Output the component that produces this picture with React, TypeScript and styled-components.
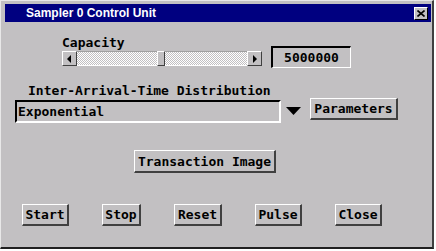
import React from 'react'
import styled, { createGlobalStyle } from 'styled-components'

const GlobalStyle = createGlobalStyle`
  html, body {
    margin: 0;
    padding: 0;
    background: #ffffff;
  }
`

const gray = '#c2c0c2'
const mono = `"DejaVu Sans Mono", "Liberation Mono", monospace`

const Window = styled.div`
  width: 434px;
  height: 249px;
  box-sizing: border-box;
  background: ${gray};
  border-top: 1px solid #e8e8e8;
  border-left: 1px solid #e8e8e8;
  border-right: 2px solid #404040;
  border-bottom: 2px solid #202020;
  padding: 3px 1px 0 4px;
  display: flex;
  flex-direction: column;
  font-family: ${mono};
`

const TitleBar = styled.div`
  height: 18px;
  background: #000080;
  display: flex;
  align-items: center;
  justify-content: space-between;
  padding: 0 3px 0 21px;
`

const Title = styled.span`
  color: #ffffff;
  font-family: 'Liberation Sans', Arial, sans-serif;
  font-weight: bold;
  font-size: 12px;
`

const CloseBox = styled.div`
  width: 14px;
  height: 13px;
  box-sizing: border-box;
  background: ${gray};
  border-top: 1px solid #ffffff;
  border-left: 1px solid #ffffff;
  border-right: 1px solid #000000;
  border-bottom: 1px solid #000000;
  display: flex;
  align-items: center;
  justify-content: center;
`

const Body = styled.div`
  flex: 1;
  display: flex;
  flex-direction: column;
  padding-top: 14px;
`

const Label = styled.div<{ $indent: number }>`
  margin-left: ${p => p.$indent}px;
  font-size: 13px;
  font-weight: bold;
  line-height: 14px;
  color: #000;
`

const CapacityRow = styled.div`
  display: flex;
  align-items: flex-end;
  margin-left: 57px;
`

const CapacityGroup = styled.div`
  display: flex;
  flex-direction: column;
  gap: 1px;
`

const Scrollbar = styled.div`
  width: 200px;
  height: 15px;
  display: flex;
  margin-bottom: 2px;
`

const Trough = styled.div`
  flex: 1;
  position: relative;
  background-color: #ffffff;
  background-image: repeating-conic-gradient(${gray} 0 25%, #ffffff 0 50%);
  background-size: 2px 2px;
  border-top: 1px solid #a0a0a0;
  border-bottom: 1px solid #ffffff;
`

const Thumb = styled.div`
  position: absolute;
  top: -1px;
  left: 80px;
  width: 8px;
  height: 15px;
  box-sizing: border-box;
  background: ${gray};
  border-top: 1px solid #ffffff;
  border-left: 1px solid #ffffff;
  border-right: 1px solid #404040;
  border-bottom: 1px solid #404040;
`

const ArrowBox = styled.div`
  width: 15px;
  height: 15px;
  box-sizing: border-box;
  background: ${gray};
  border-top: 1px solid #ffffff;
  border-left: 1px solid #ffffff;
  border-right: 1px solid #404040;
  border-bottom: 1px solid #404040;
  display: flex;
  align-items: center;
  justify-content: center;
`

const ValueField = styled.div`
  width: 80px;
  height: 22px;
  margin-left: 9px;
  box-sizing: border-box;
  background: ${gray};
  border-top: 2px solid #000000;
  border-left: 2px solid #000000;
  border-right: 1px solid #ffffff;
  border-bottom: 1px solid #ffffff;
  display: flex;
  align-items: center;
  justify-content: center;
  font-size: 13px;
  font-weight: bold;
`

const DistLabel = styled(Label)`
  margin-top: 16px;
`

const ComboRow = styled.div`
  display: flex;
  align-items: flex-start;
  margin-left: 10px;
  margin-top: 2px;
`

const ComboField = styled.div`
  width: 266px;
  height: 23px;
  box-sizing: border-box;
  background: ${gray};
  border-top: 2px solid #000000;
  border-left: 2px solid #000000;
  border-right: 2px solid #ffffff;
  border-bottom: 2px solid #ffffff;
  display: flex;
  align-items: center;
  padding-left: 1px;
  font-size: 13px;
  font-weight: bold;
`

const ComboArrow = styled.div`
  width: 22px;
  height: 22px;
  margin-left: 1px;
  display: flex;
  align-items: center;
  justify-content: center;
`

const Button = styled.button<{ $w: number; $h?: number }>`
  width: ${p => p.$w}px;
  height: ${p => p.$h ?? 22}px;
  box-sizing: border-box;
  padding: 0;
  margin: 0;
  background: ${gray};
  border-top: 1px solid #ffffff;
  border-left: 1px solid #ffffff;
  border-right: 2px solid #404040;
  border-bottom: 2px solid #404040;
  font-family: ${mono};
  font-size: 13px;
  font-weight: bold;
  color: #000;
  display: flex;
  align-items: center;
  justify-content: center;
`

const ParamsButton = styled(Button)`
  margin-left: 6px;
  margin-top: -2px;
`

const ImageRow = styled.div`
  margin-left: 129px;
  margin-top: 27px;
`

const ActionRow = styled.div`
  display: flex;
  margin-top: 31px;
  margin-left: 17px;
  gap: 33px;
`

const LeftArrow = () => (
  <svg width="5" height="8" viewBox="0 0 5 8">
    <polygon points="4,0 4,8 0,4" fill="#000" />
  </svg>
)

const RightArrow = () => (
  <svg width="5" height="8" viewBox="0 0 5 8">
    <polygon points="1,0 1,8 5,4" fill="#000" />
  </svg>
)

const DownArrow = () => (
  <svg width="15" height="8" viewBox="0 0 15 8">
    <polygon points="0,0 15,0 7.5,8" fill="#000" />
  </svg>
)

const CloseX = () => (
  <svg width="8" height="7" viewBox="0 0 8 7">
    <path d="M0.5 0.5 L7.5 6.5 M7.5 0.5 L0.5 6.5" stroke="#000" strokeWidth="1.6" />
  </svg>
)

export default function App() {
  return (
    <>
      <GlobalStyle />
      <Window>
        <TitleBar>
          <Title>Sampler 0 Control Unit</Title>
          <CloseBox>
            <CloseX />
          </CloseBox>
        </TitleBar>
        <Body>
          <CapacityRow>
            <CapacityGroup>
              <Label $indent={0}>Capacity</Label>
              <Scrollbar>
                <ArrowBox>
                  <LeftArrow />
                </ArrowBox>
                <Trough>
                  <Thumb />
                </Trough>
                <ArrowBox>
                  <RightArrow />
                </ArrowBox>
              </Scrollbar>
            </CapacityGroup>
            <ValueField>5000000</ValueField>
          </CapacityRow>

          <DistLabel $indent={23}>Inter-Arrival-Time Distribution</DistLabel>
          <ComboRow>
            <ComboField>Exponential</ComboField>
            <ComboArrow>
              <DownArrow />
            </ComboArrow>
            <ParamsButton $w={88}>Parameters</ParamsButton>
          </ComboRow>

          <ImageRow>
            <Button $w={142} $h={23}>Transaction Image</Button>
          </ImageRow>

          <ActionRow>
            <Button $w={47}>Start</Button>
            <Button $w={39}>Stop</Button>
            <Button $w={48}>Reset</Button>
            <Button $w={47}>Pulse</Button>
            <Button $w={47}>Close</Button>
          </ActionRow>
        </Body>
      </Window>
    </>
  )
}
